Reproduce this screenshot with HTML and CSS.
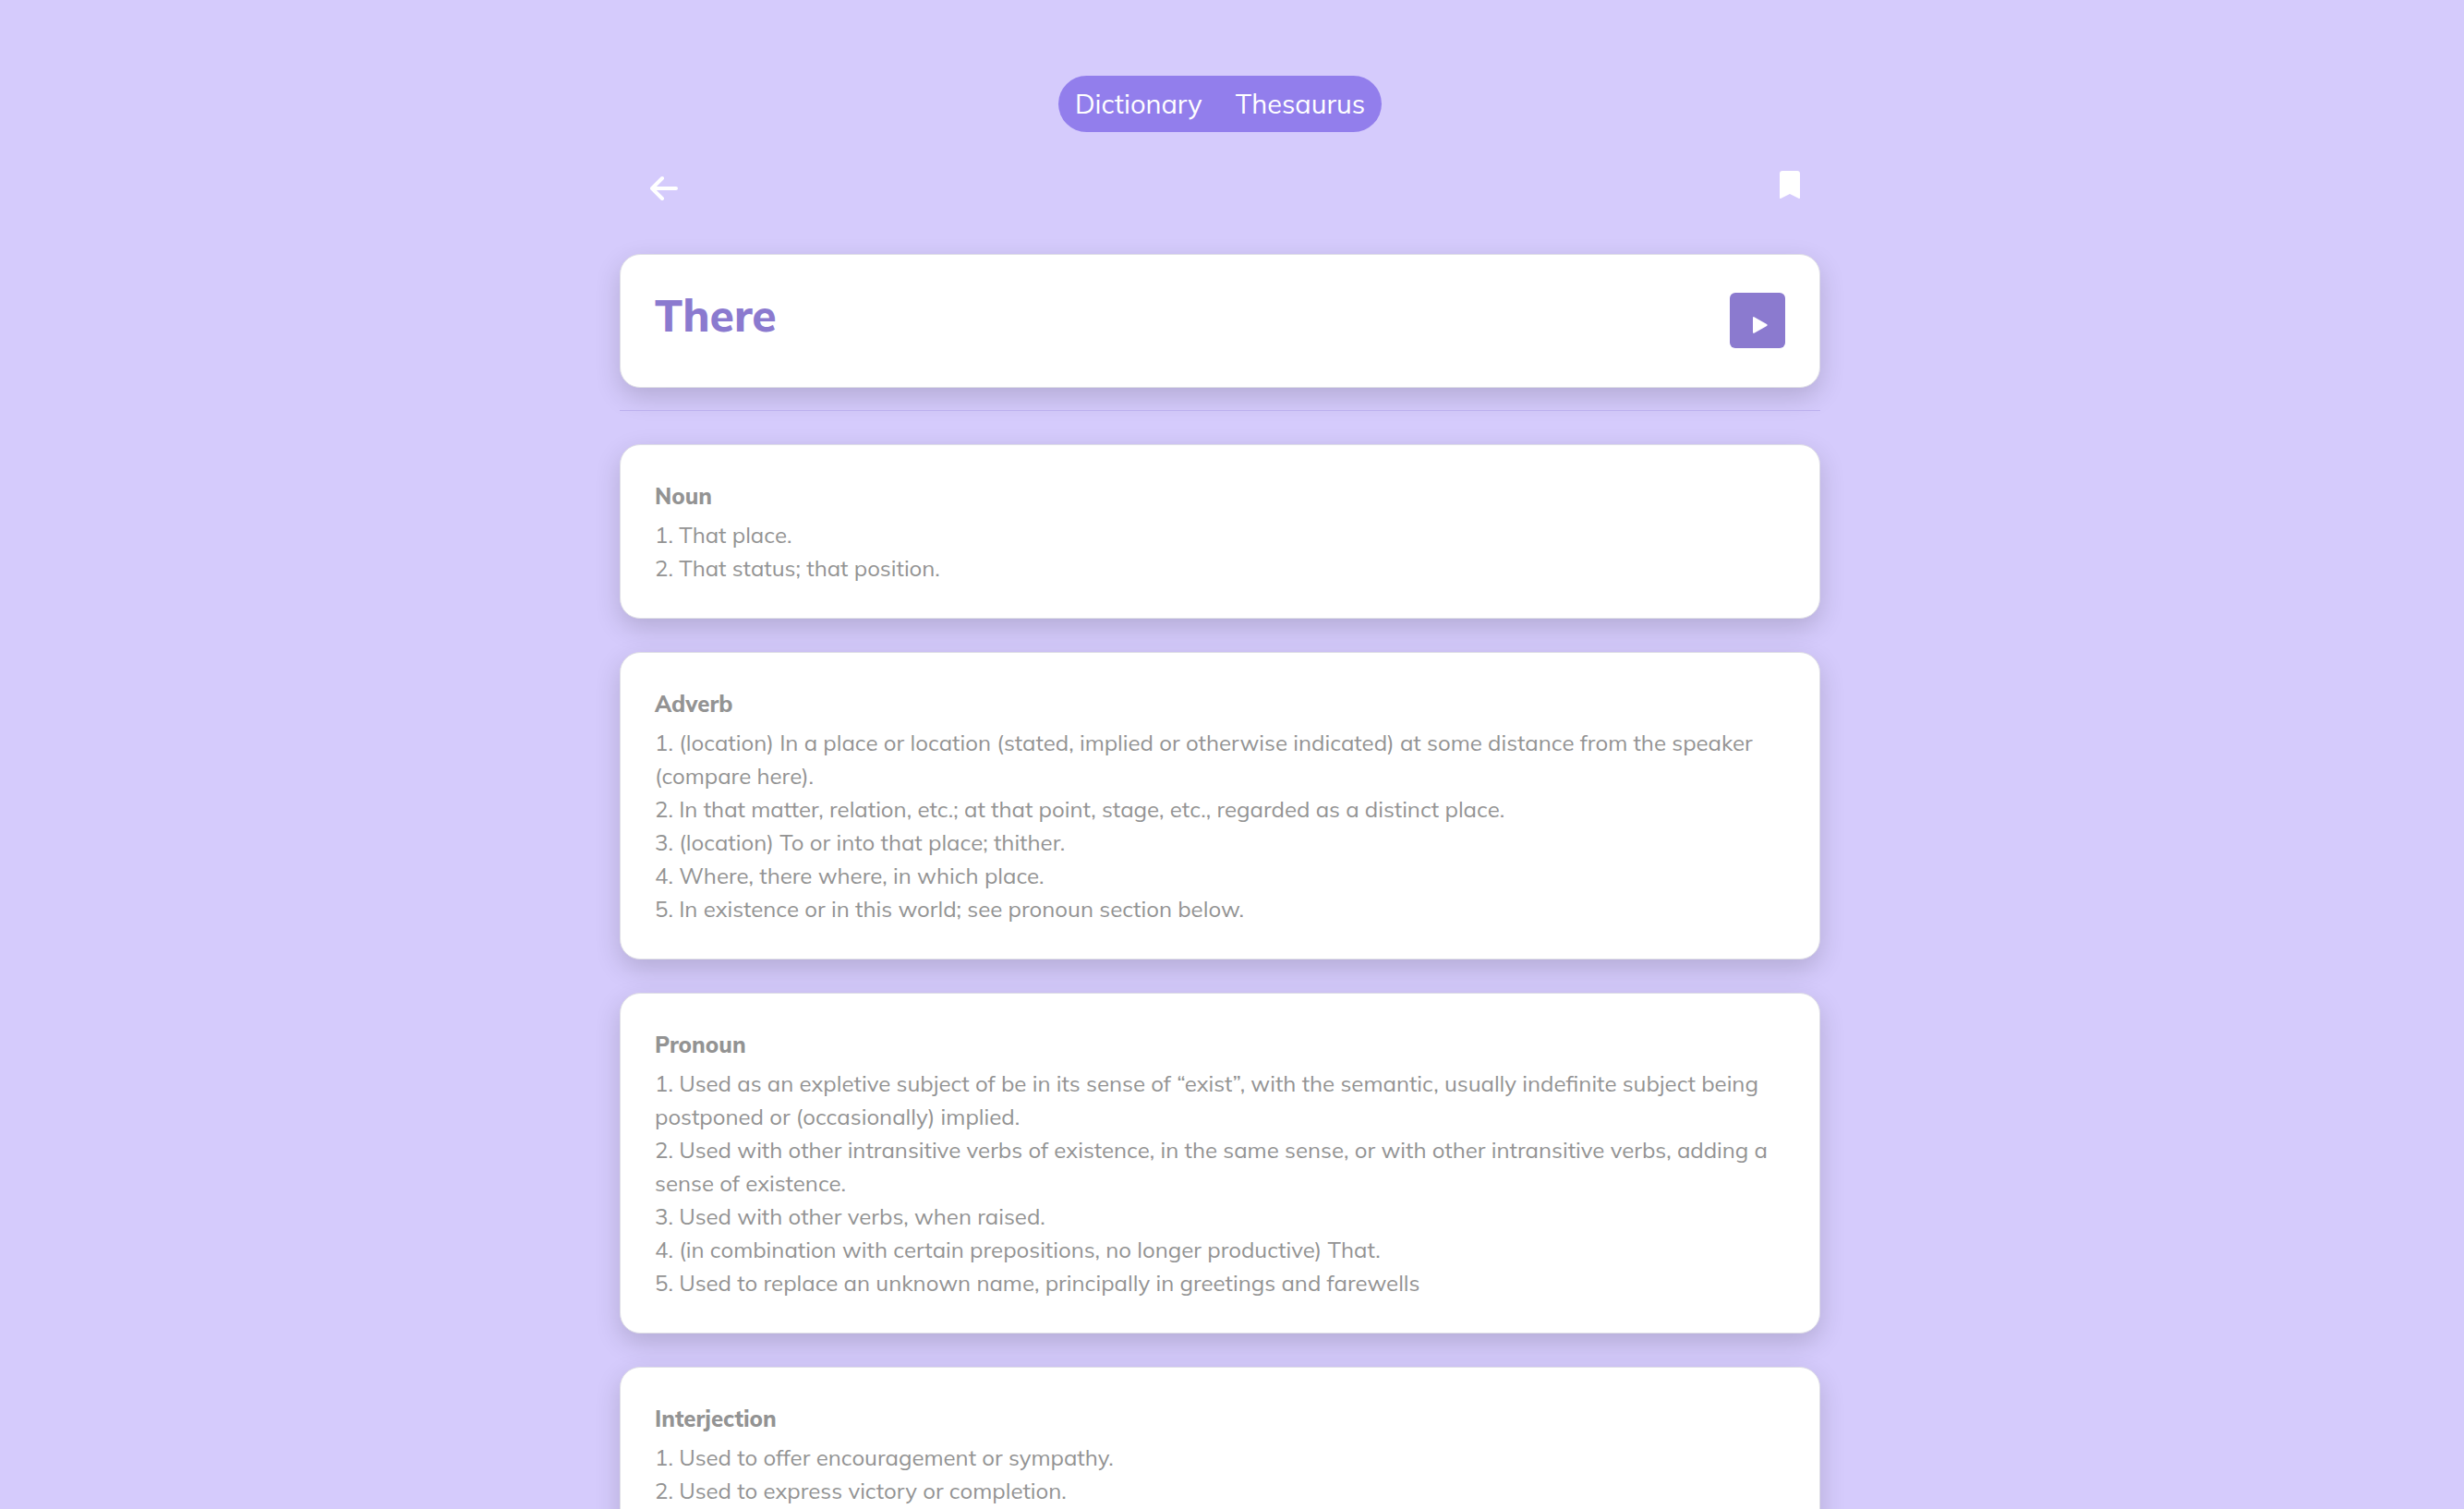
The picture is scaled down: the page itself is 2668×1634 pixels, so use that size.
FILE: index.html
```html
<!DOCTYPE html>
<html lang="en">
<head>
<meta charset="utf-8">
<meta name="viewport" content="width=device-width, initial-scale=1">
<title>There – Dictionary</title>
<link rel="stylesheet" href="styles.css">
</head>
<body>
<div class="page">
  <div class="container">
    <nav class="tabs">
      <a class="tab" href="#dictionary">Dictionary</a>
      <a class="tab" href="#thesaurus">Thesaurus</a>
    </nav>
    <div class="toolbar">
      <button class="icon-button" type="button" aria-label="Back">
        <svg width="30" height="28" viewBox="0 0 30 28" fill="none" stroke="#fff" stroke-width="4" stroke-linecap="round" stroke-linejoin="round"><path d="M13 3 2 14l11 11M3 14h25"/></svg>
      </button>
      <button class="icon-button" type="button" aria-label="Bookmark">
        <svg width="24" height="32" viewBox="0 0 24 32" fill="#fff"><path d="M4 0h16q3 0 3 3v26q0 1.400-1 1L12 25 2 30q-1 .4-1-1V3q0-3 3-3z"/></svg>
      </button>
    </div>
    <main>
      <header class="card word">
        <h1 class="word-title">There</h1>
        <button class="play" type="button" aria-label="Play pronunciation">
          <svg width="16" height="18" viewBox="0 0 16 18" fill="#fff"><path d="M0 1.500Q0-.6 1.800.4L15 8q1.400 1 0 2L1.800 17.600Q0 18.600 0 16.500z"/></svg>
        </button>
      </header>
      <hr class="divider">
      <div class="entries">
        <section class="card">
          <h2 class="part">Noun</h2>
          <ol class="senses">
            <li>1. That place.</li>
            <li>2. That status; that position.</li>
          </ol>
        </section>
        <section class="card">
          <h2 class="part">Adverb</h2>
          <ol class="senses">
            <li>1. (location) In a place or location (stated, implied or otherwise indicated) at some distance from the speaker (compare here).</li>
            <li>2. In that matter, relation, etc.; at that point, stage, etc., regarded as a distinct place.</li>
            <li>3. (location) To or into that place; thither.</li>
            <li>4. Where, there where, in which place.</li>
            <li>5. In existence or in this world; see pronoun section below.</li>
          </ol>
        </section>
        <section class="card">
          <h2 class="part">Pronoun</h2>
          <ol class="senses">
            <li>1. Used as an expletive subject of be in its sense of “exist”, with the semantic, usually indefinite subject being postponed or (occasionally) implied.</li>
            <li>2. Used with other intransitive verbs of existence, in the same sense, or with other intransitive verbs, adding a sense of existence.</li>
            <li>3. Used with other verbs, when raised.</li>
            <li>4. (in combination with certain prepositions, no longer productive) That.</li>
            <li>5. Used to replace an unknown name, principally in greetings and farewells</li>
          </ol>
        </section>
        <section class="card">
          <h2 class="part">Interjection</h2>
          <ol class="senses">
            <li>1. Used to offer encouragement or sympathy.</li>
            <li>2. Used to express victory or completion.</li>
          </ol>
        </section>
      </div>
    </main>
  </div>
</div>
</body>
</html>
```
FILE: styles.css
```css
* {
  box-sizing: border-box;
}

body {
  margin: 0;
  background: #d5cbfc;
  color: #939393;
  font-family: Mulish, Muli, Lato, sans-serif;
  font-size: 24px;
  line-height: 36px;
}

.page {
  height: 100vh;
  overflow-y: auto;
  padding: 82px 26px 36px 0;
}

.container {
  max-width: 1300px;
  margin: 0 auto;
}

.tabs {
  display: flex;
  width: fit-content;
  margin: 0 auto;
  border-radius: 31px;
  background: #927eec;
}

.tab {
  padding: 12px 18px 13px;
  color: #fff;
  font-size: 29px;
  text-decoration: none;
}

.toolbar {
  display: flex;
  justify-content: space-between;
  align-items: flex-start;
  height: 132px;
  padding: 42px 21px 0 33px;
}

.icon-button {
  display: flex;
  padding: 0;
  border: 0;
  background: none;
}

.icon-button:first-child {
  margin-top: 5px;
}

.card {
  padding: 36px 37px;
  border: 1px solid #dfdfe6;
  border-radius: 22px;
  background: #fff;
  box-shadow: 0 10px 28px rgba(0, 0, 0, 0.16);
}

.word {
  display: flex;
  justify-content: space-between;
  align-items: flex-start;
  min-height: 145px;
  padding-top: 41px;
}

.word-title {
  margin: 0;
  color: #8b7acf;
  font-size: 48px;
  font-weight: 800;
  line-height: 48px;
}

.play {
  display: flex;
  align-items: center;
  justify-content: center;
  width: 60px;
  height: 60px;
  padding: 10px 0 0 6px;
  border: 0;
  border-radius: 6px;
  background: #8b7acf;
}

.divider {
  margin: 24px 0 36px;
  border: 0;
  border-top: 1px solid #bcb0ee;
}

.entries {
  display: grid;
  gap: 36px;
}

.part {
  margin: 0 0 5px;
  font-size: 24px;
  font-weight: 800;
  line-height: 38px;
}

.senses {
  margin: 0;
  padding: 0;
  list-style: none;
}
```
